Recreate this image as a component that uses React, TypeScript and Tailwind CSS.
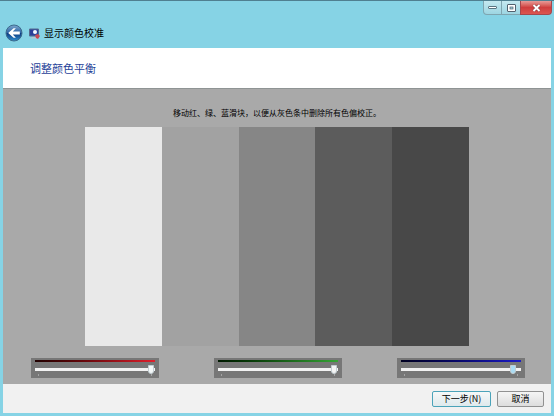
import React, { useState } from "react";

const bars = ["bg-[#e9e9e9]", "bg-[#a2a2a2]", "bg-[#868686]", "bg-[#5c5c5c]", "bg-[#484848]"];

const channels = [
  { label: "红", start: 99, gradient: "from-[#200000] to-[#e0202c]", thumb: "[&::-webkit-slider-thumb]:bg-[#f4f8f8]" },
  { label: "绿", start: 99, gradient: "from-[#001800] to-[#35a535]", thumb: "[&::-webkit-slider-thumb]:bg-[#f4f4f4]" },
  { label: "蓝", start: 96, gradient: "from-[#000020] to-[#1c1cc8]", thumb: "[&::-webkit-slider-thumb]:bg-[#a9dcf4]" },
];

function BackIcon() {
  return (
    <svg className="h-[18px] w-[18px]" viewBox="0 0 18 18" aria-hidden="true">
      <defs>
        <linearGradient id="back" x1="0" y1="0" x2="0" y2="1">
          <stop offset="0" stopColor="#7fa9cf" />
          <stop offset="0.48" stopColor="#2c64a5" />
          <stop offset="0.52" stopColor="#0d3b80" />
          <stop offset="1" stopColor="#2f8fd0" />
        </linearGradient>
      </defs>
      <circle cx="9" cy="9" r="8" fill="url(#back)" stroke="#3c6a8c" />
      <path d="M3.2 9 8.6 4.2h2.3L7.8 7.6h7v2.8h-7l3.1 3.4H8.6z" fill="#fff" />
    </svg>
  );
}

function DisplayIcon() {
  return (
    <svg className="h-[11px] w-[11px]" viewBox="0 0 11 11" aria-hidden="true">
      <path d="M.5 1h9v7h-9z" fill="#2846a0" stroke="#56688c" />
      <path d="M1.5 2h3v5h-3z" fill="#2b3f98" />
      <circle cx="6" cy="4" r="2" fill="#f4f8ff" />
      <path d="M3 9h4v1.5H2z" fill="#b7c6d0" />
      <path d="m6 7 3-1 2 2-2 3-2-1z" fill="#c94a55" />
    </svg>
  );
}

function WindowButtons() {
  const button =
    "flex h-[14px] items-center justify-center border border-t-0 border-[#7fa5b0] bg-linear-to-b from-[#c5e9f0] to-[#9cd5e2]";
  return (
    <div className="flex">
      <button type="button" aria-label="最小化" className={`${button} w-[19px] rounded-bl-sm`}>
        <svg className="h-[5px] w-[9px]" viewBox="0 0 9 5">
          <rect x=".5" y="1.5" width="8" height="2" rx=".5" fill="#fff" stroke="#5b7581" />
        </svg>
      </button>
      <button type="button" aria-label="最大化" className={`${button} w-[18px] border-x-0`}>
        <svg className="h-2 w-[9px]" viewBox="0 0 9 8">
          <rect x=".5" y=".5" width="8" height="7" rx=".5" fill="#fff" stroke="#52616e" />
          <rect x="3" y="3" width="3" height="2" fill="#a4d3de" stroke="#52616e" strokeWidth=".7" />
        </svg>
      </button>
      <button
        type="button"
        aria-label="关闭"
        className="flex h-[14px] w-8 items-center justify-center rounded-br-sm border border-t-0 border-[#a6474c] bg-linear-to-b from-[#e69a98] via-[#cf3e3e] to-[#dc5650]"
      >
        <svg className="h-2 w-[9px]" viewBox="0 0 9 8">
          <path d="m1.5 1 6 6m0-6-6 6" stroke="#7d3035" strokeWidth="3" />
          <path d="m1.5 1 6 6m0-6-6 6" stroke="#fff" strokeWidth="2" />
        </svg>
      </button>
    </div>
  );
}

function ColorSlider({ label, start, gradient, thumb }: (typeof channels)[number]) {
  const [value, setValue] = useState(start);

  return (
    <div className="flex h-5 w-32 flex-col bg-[#777777] px-1 pt-[2px]">
      <span className={`h-[2px] bg-linear-to-r ${gradient}`} />
      <input
        type="range"
        aria-label={label}
        min={0}
        max={100}
        value={value}
        onChange={(e) => setValue(Number(e.target.value))}
        className={`mt-[3px] block h-[9px] w-full appearance-none bg-transparent [&::-webkit-slider-runnable-track]:h-[3px] [&::-webkit-slider-runnable-track]:bg-[#f2f2f2] [&::-webkit-slider-thumb]:-mt-[3px] [&::-webkit-slider-thumb]:h-[9px] [&::-webkit-slider-thumb]:w-[6px] [&::-webkit-slider-thumb]:appearance-none [&::-webkit-slider-thumb]:rounded-b-sm [&::-webkit-slider-thumb]:border [&::-webkit-slider-thumb]:border-[#c3ced3] ${thumb}`}
      />
      <span className="mx-[3px] flex justify-between">
        <span className="h-[2px] w-px bg-[#a4a4a4]" />
        <span className="h-[2px] w-px bg-[#a4a4a4]" />
      </span>
    </div>
  );
}

export default function App() {
  return (
    <div className="flex min-h-screen flex-col border-t border-[#4f7f90] bg-[#86d3e5] px-[3px] pb-[3px] font-['Noto_Sans_CJK_SC',sans-serif] text-black">
      <header className="h-[47px]">
        <div className="-mr-px flex justify-end">
          <WindowButtons />
        </div>
        <div className="flex items-center pt-[9px] pl-[2px]">
          <button type="button" aria-label="后退">
            <BackIcon />
          </button>
          <span className="ml-[6px]">
            <DisplayIcon />
          </span>
          <h1 className="ml-1 text-[10px] leading-4">显示颜色校准</h1>
        </div>
      </header>

      <div className="flex h-10 items-center bg-white px-[27px]">
        <h2 className="text-[11px] leading-4 text-[#1f3f98]">调整颜色平衡</h2>
      </div>

      <main className="flex flex-1 flex-col border-t border-[#8f9494] bg-[#a9a9a9]">
        <p className="mt-[18px] text-center text-[8px] leading-3">
          移动红、绿、蓝滑块，以便从灰色条中删除所有色偏校正。
        </p>
        <div className="mx-auto mt-2 grid min-h-[219px] w-[70%] flex-1 grid-cols-5">
          {bars.map((color) => (
            <div key={color} className={color} />
          ))}
        </div>
        <div className="mt-3 mb-[6px] flex justify-between pr-[26px] pl-7">
          {channels.map((channel) => (
            <ColorSlider key={channel.label} {...channel} />
          ))}
        </div>
      </main>

      <footer className="flex h-[29px] items-center justify-end gap-[6px] bg-[#f1f1f1] pr-[7px] text-[9px] leading-3">
        <button
          type="button"
          className="h-4 w-[59px] rounded-xs border border-[#4ba3b9] bg-linear-to-b from-[#f6f8f8] to-[#dfe9ec]"
        >
          下一步(N)
        </button>
        <button
          type="button"
          className="h-4 w-[47px] rounded-xs border border-[#919191] bg-linear-to-b from-[#f5f5f5] to-[#dddddd]"
        >
          取消
        </button>
      </footer>
    </div>
  );
}
